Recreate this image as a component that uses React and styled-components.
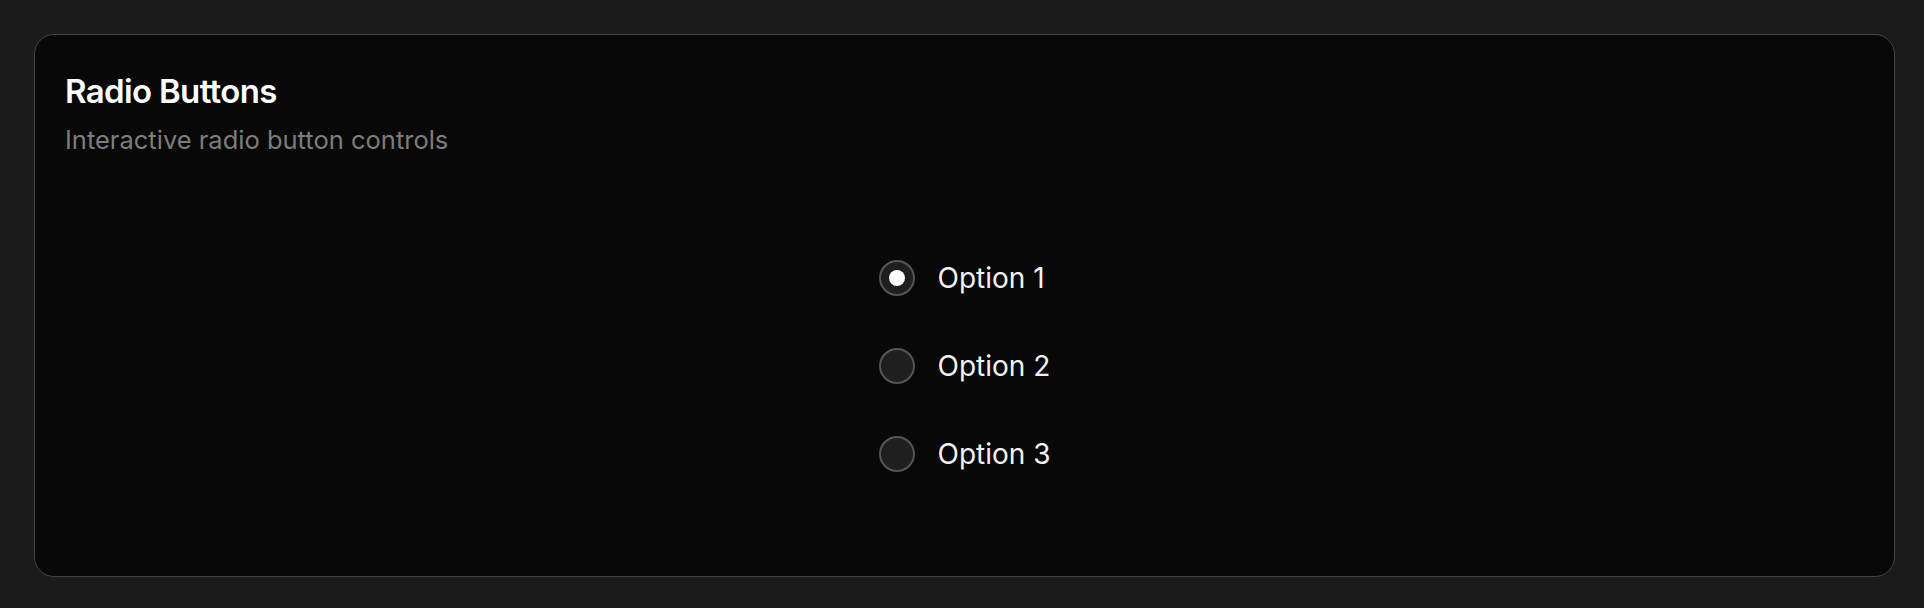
import React, { useState } from "react";
import styled, { createGlobalStyle } from "styled-components";

const GlobalStyle = createGlobalStyle`
  html, body {
    margin: 0;
    padding: 0;
    background: #1b1b1b;
  }
  * { box-sizing: border-box; }
  body {
    font-family: Inter, "Noto Sans", "Liberation Sans", sans-serif;
    -webkit-font-smoothing: antialiased;
  }
`;

const Page = styled.div`
  min-height: 100vh;
  height: 608px;
  padding: 34px 29px 31px 34px;
  display: flex;
`;

const Card = styled.section`
  flex: 1;
  display: flex;
  flex-direction: column;
  background: #080808;
  border: 1px solid #444444;
  border-radius: 20px;
  padding: 36px 30px 35px 30px;
`;

const Title = styled.h2`
  margin: 0;
  font-size: 33px;
  line-height: 40px;
  font-weight: 600;
  letter-spacing: -0.02em;
  color: #ffffff;
`;

const Subtitle = styled.p`
  margin: 10px 0 0;
  font-size: 25.5px;
  line-height: 37.5px;
  font-weight: 400;
  color: #7d7d7d;
`;

const Body = styled.div`
  flex: 1;
  display: flex;
  align-items: center;
  justify-content: center;
  padding-top: 33px;
`;

const Group = styled.div`
  display: flex;
  flex-direction: column;
  align-items: flex-start;
  gap: 46px;
`;

const Row = styled.label`
  display: flex;
  align-items: center;
  gap: 23px;
  cursor: pointer;
`;

const HiddenInput = styled.input`
  position: absolute;
  opacity: 0;
  width: 0;
  height: 0;
  margin: 0;
`;

const Circle = styled.span`
  width: 36px;
  height: 36px;
  border-radius: 50%;
  background: #1f1f1f;
  border: 2px solid #555555;
  display: flex;
  align-items: center;
  justify-content: center;
  flex-shrink: 0;
`;

const Dot = styled.span`
  width: 16px;
  height: 16px;
  border-radius: 50%;
  background: #ffffff;
  display: ${(p) => (p.$on ? "block" : "none")};
`;

const Label = styled.span`
  font-size: 28px;
  line-height: 42px;
  font-weight: 400;
  color: #f2f2f2;
`;

const options = ["Option 1", "Option 2", "Option 3"];

export default function App() {
  const [selected, setSelected] = useState("Option 1");
  return (
    <>
      <GlobalStyle />
      <Page>
        <Card>
          <Title>Radio Buttons</Title>
          <Subtitle>Interactive radio button controls</Subtitle>
          <Body>
            <Group role="radiogroup">
              {options.map((o) => (
                <Row key={o}>
                  <HiddenInput
                    type="radio"
                    name="demo"
                    value={o}
                    checked={selected === o}
                    onChange={() => setSelected(o)}
                  />
                  <Circle>
                    <Dot $on={selected === o} />
                  </Circle>
                  <Label>{o}</Label>
                </Row>
              ))}
            </Group>
          </Body>
        </Card>
      </Page>
    </>
  );
}
